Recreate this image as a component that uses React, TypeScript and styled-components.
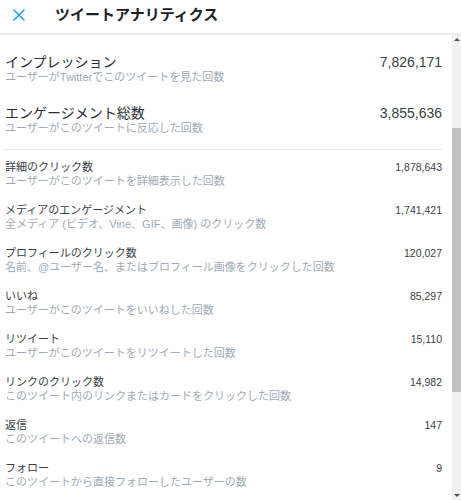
import styled, { createGlobalStyle } from "styled-components"

const GlobalStyle = createGlobalStyle`
  html, body {
    margin: 0;
    padding: 0;
    background: #ffffff;
  }
  body {
    font-family: "Liberation Sans", "Noto Sans CJK JP", sans-serif;
  }
`

type Metric = {
  title: string
  note: string
  value: string
}

const summary: Metric[] = [
  { title: "インプレッション", note: "ユーザーがTwitterでこのツイートを見た回数", value: "7,826,171" },
  { title: "エンゲージメント総数", note: "ユーザーがこのツイートに反応した回数", value: "3,855,636" },
]

const details: Metric[] = [
  { title: "詳細のクリック数", note: "ユーザーがこのツイートを詳細表示した回数", value: "1,878,643" },
  { title: "メディアのエンゲージメント", note: "全メディア (ビデオ、Vine、GIF、画像) のクリック数", value: "1,741,421" },
  { title: "プロフィールのクリック数", note: "名前、@ユーザー名、またはプロフィール画像をクリックした回数", value: "120,027" },
  { title: "いいね", note: "ユーザーがこのツイートをいいねした回数", value: "85,297" },
  { title: "リツイート", note: "ユーザーがこのツイートをリツイートした回数", value: "15,110" },
  { title: "リンクのクリック数", note: "このツイート内のリンクまたはカードをクリックした回数", value: "14,982" },
  { title: "返信", note: "このツイートへの返信数", value: "147" },
  { title: "フォロー", note: "このツイートから直接フォローしたユーザーの数", value: "9" },
]

export default function App() {
  return (
    <>
      <GlobalStyle />
      <Page>
        <Header>
          <CloseButton aria-label="close">
            <svg width="12" height="12" viewBox="0 0 12 12">
              <path d="M1 1 L11 11 M11 1 L1 11" stroke="#1da1f2" strokeWidth="1.5" strokeLinecap="round" />
            </svg>
          </CloseButton>
          <HeaderTitle>ツイートアナリティクス</HeaderTitle>
        </Header>

        <Body>
          <Content>
            <SummaryList>
              {summary.map((m) => (
                <MetricRow key={m.title}>
                  <MetricText>
                    <MetricTitle $big>{m.title}</MetricTitle>
                    <MetricNote>{m.note}</MetricNote>
                  </MetricText>
                  <MetricValue $big>{m.value}</MetricValue>
                </MetricRow>
              ))}
            </SummaryList>

            <Divider />

            <DetailList>
              {details.map((m) => (
                <MetricRow key={m.title}>
                  <MetricText>
                    <MetricTitle>{m.title}</MetricTitle>
                    <MetricNote>{m.note}</MetricNote>
                  </MetricText>
                  <MetricValue>{m.value}</MetricValue>
                </MetricRow>
              ))}
            </DetailList>
          </Content>

          <ScrollTrack>
            <ScrollArrow $dir="up" />
            <ScrollGap $size={84} />
            <ScrollThumb />
            <ScrollGap />
            <ScrollArrow $dir="down" />
          </ScrollTrack>
        </Body>
      </Page>
    </>
  )
}

const Page = styled.div`
  width: 461px;
  height: 500px;
  display: flex;
  flex-direction: column;
  overflow: hidden;
  background: #ffffff;
`

const Header = styled.div`
  height: 33px;
  flex: 0 0 auto;
  display: flex;
  align-items: center;
  border-bottom: 2px solid #e8ecef;
`

const CloseButton = styled.div`
  width: 12px;
  height: 12px;
  margin-left: 13px;
  margin-top: -3px;
  display: flex;
`

const HeaderTitle = styled.div`
  margin-left: 30px;
  margin-top: -3px;
  font-size: 15px;
  font-weight: bold;
  line-height: 18px;
  color: #1c2126;
`

const Body = styled.div`
  flex: 1;
  display: flex;
  min-height: 0;
`

const Content = styled.div`
  flex: 1;
  padding: 19px 10px 0 5px;
`

const SummaryList = styled.div`
  display: flex;
  flex-direction: column;
  gap: 21px;
`

const DetailList = styled.div`
  display: flex;
  flex-direction: column;
  gap: 15px;
  padding-top: 10px;
`

const MetricRow = styled.div`
  display: flex;
  justify-content: space-between;
  align-items: flex-start;
`

const MetricText = styled.div`
  display: flex;
  flex-direction: column;
`

const MetricTitle = styled.div<{ $big?: boolean }>`
  font-size: ${(p) => (p.$big ? "14px" : "11px")};
  line-height: ${(p) => (p.$big ? "16px" : "14px")};
  color: ${(p) => (p.$big ? "#2b3035" : "#3a3f44")};
`

const MetricNote = styled.div`
  font-size: 11px;
  line-height: 14px;
  color: #9eabb6;
`

const MetricValue = styled.div<{ $big?: boolean }>`
  font-size: ${(p) => (p.$big ? "14px" : "10.5px")};
  line-height: ${(p) => (p.$big ? "16px" : "14px")};
  color: #3a3f44;
`

const Divider = styled.div`
  height: 1px;
  background: #e6ecf0;
  margin-top: 14px;
`

const ScrollTrack = styled.div`
  width: 9px;
  flex: 0 0 9px;
  background: #f1f1f1;
  display: flex;
  flex-direction: column;
`

const ScrollArrow = styled.div<{ $dir: "up" | "down" }>`
  height: 9px;
  flex: 0 0 9px;
  display: flex;
  align-items: center;
  justify-content: center;
  &::before {
    content: "";
    width: 0;
    height: 0;
    border-left: 3px solid transparent;
    border-right: 3px solid transparent;
    ${(p) => (p.$dir === "up" ? "border-bottom: 3px solid #505050;" : "border-top: 3px solid #505050;")}
  }
`

const ScrollGap = styled.div<{ $size?: number }>`
  flex: ${(p) => (p.$size ? `0 0 ${p.$size}px` : "1")};
`

const ScrollThumb = styled.div`
  flex: 0 0 264px;
  background: #c1c1c1;
`
